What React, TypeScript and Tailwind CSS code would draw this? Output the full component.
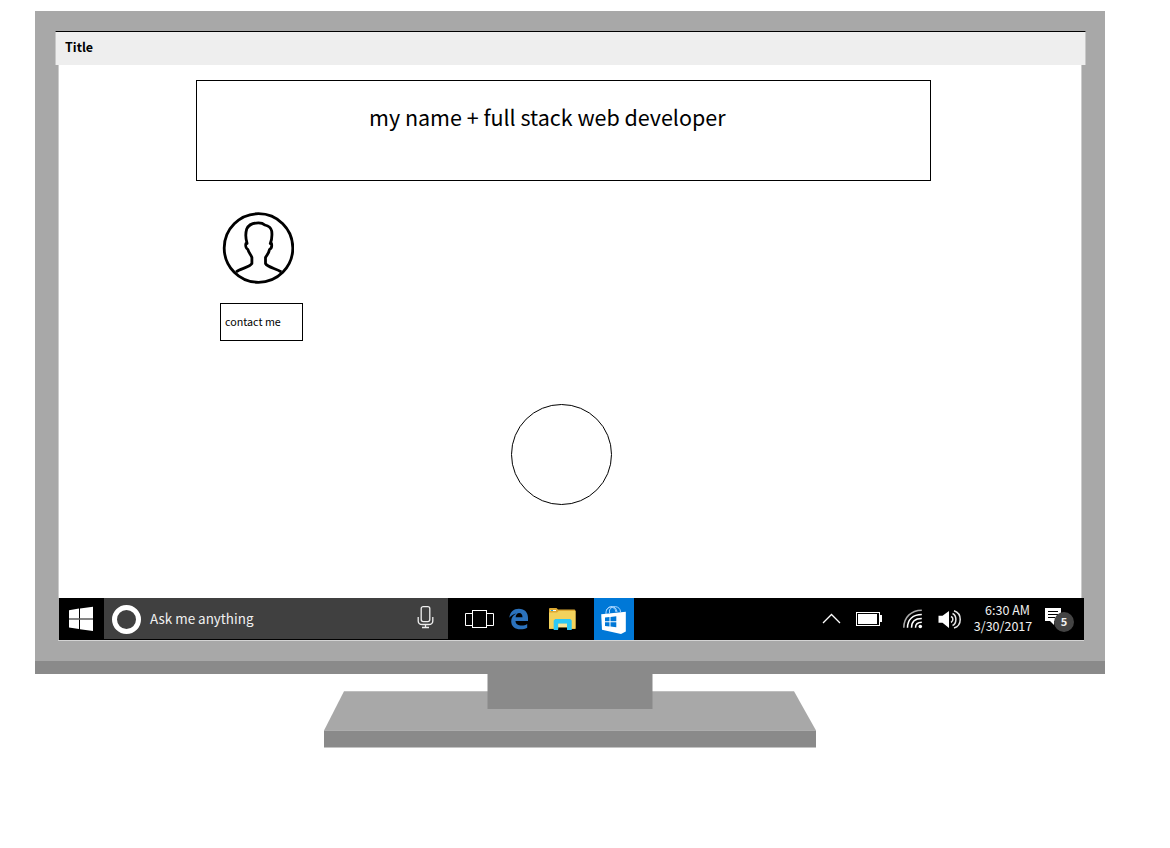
import type { ReactNode } from "react";

type GlyphProps = { viewBox: string; className: string; label: string; children: ReactNode };

function Glyph({ viewBox, className, label, children }: GlyphProps) {
  return (
    <svg viewBox={viewBox} className={`block shrink-0 ${className}`} role="img" aria-label={label} fill="none">
      {children}
    </svg>
  );
}

function UserAvatar() {
  return (
    <Glyph viewBox="-0.5 0 72 72" className="h-[72px] w-[72px]" label="User">
      <g stroke="#000" strokeWidth="2.8" strokeLinejoin="round">
        <circle cx="36" cy="36" r="34.3" />
        <path d="M13.500 60C18 56.500 27 55.500 29.400 51.500V45.500C28.500 42.500 26.200 41 25.400 37.500C23.400 36.500 22.900 33.500 23.400 31.500H24.600C23.200 27 23 21 24.200 17C26.200 12.500 31 10.900 36 10.900C39 10.900 40.800 11.600 42.300 13C46 13.800 48.500 15.500 49.200 19C49.700 23 49.200 28 47.800 31.500H49C49.500 34 48.900 36.500 47 37.500C46.600 40.500 44.500 43 43 45.500V51.500C45 55.500 54 56.500 58.800 60" />
      </g>
    </Glyph>
  );
}

function Taskbar() {
  return (
    <footer className="ml-[4px] flex h-[42px] w-[1025px] bg-black text-[#f0f0f0]">
      <div className="w-[45px] shrink-0">
        <Glyph viewBox="0 0 45 42" className="h-[42px] w-[45px]" label="Start">
          <path d="M10 12.200 20 10.600V20.500H10ZM21 10.400 34 8.800V20.500H21ZM10 21.500H20V31L10 29.500ZM21 21.500H34V33L21 31.200Z" fill="#fff" />
          <path d="M10 21H34" stroke="#888" />
        </Glyph>
      </div>
      <div className="flex h-[41px] w-[344px] shrink-0 items-center bg-[#404040]">
        <div className="ml-[8px] mt-[2px] h-[29px] w-[29px] rounded-full border-[5px] border-white" />
        <span className="-mt-px ml-[9px] w-[266px] text-[13.430px] leading-[20px]">Ask me anything</span>
        <Glyph viewBox="0 0 20 26" className="-mt-[4px] h-[26px] w-[20px]" label="Microphone">
          <rect x="5.200" y="2.600" width="8.600" height="15" rx="2" stroke="#eee" strokeWidth="1.300" />
          <path d="M2.200 13V17C2.200 19.500 4 20.500 6.500 20.500H12.500C15 20.500 16.800 19.500 16.800 17V13M9.500 20.500V23.500M6 23.500H13" stroke="#eee" strokeWidth="1.300" />
        </Glyph>
      </div>
      <Glyph viewBox="0 0 48 42" className="ml-[2px] h-[42px] w-[48px]" label="Task view">
        <g stroke="#fff">
          <rect x="22.500" y="12.500" width="14" height="17" />
          <path d="M22.500 15.500H15.500V27.500H22.500M36.500 15.500H43.500V27.500H36.500" />
        </g>
      </Glyph>
      <Glyph viewBox="0 0 24 42" className="ml-[9px] h-[42px] w-[24px]" label="Edge">
        <path d="M2.300 19.700C3.100 13.700 6.700 10.700 11.800 10.700C17.800 10.700 21 14.500 21 20V23H8.500C8.700 26.400 11.500 27.600 14.500 27.600C16.800 27.600 18.700 27 20.200 26V29.700C18.400 30.800 16 31.300 13.500 31.300C8 31.300 4.200 28.300 4.200 23.200C4.200 19.500 6.300 16.900 9.500 15.400C6.500 15.700 4.100 17.500 2.300 19.700ZM8.600 19.200H15.500C15.500 16.700 14.400 14.900 12.200 14.900C10.200 14.900 8.900 16.800 8.600 19.200Z" fill="#2b72bd" />
      </Glyph>
      <Glyph viewBox="0 0 30 42" className="ml-[16px] h-[42px] w-[30px]" label="File explorer">
        <path d="M2 11Q2 10 3 10H9.500L11 11.500H27.500Q28.500 11.500 28.500 13V31H2Z" fill="#dca832" />
        <path d="M2 14.500H10L11.500 13H28.500V30.500H2Z" fill="#f2d25c" />
        <path d="M3.500 12.500H9" stroke="#fff" />
        <path d="M4 12.500H6" stroke="#24a7dd" />
        <path d="M6.700 32V22.500L8.200 21H23.200L24.700 22.500V32H20V25.700H11.300V32Z" fill="#2cc8f5" />
        <path d="M11.300 25.700H20V29H11.300Z" fill="#f8e69b" />
        <path d="M11.300 29.500H20V32H11.300Z" fill="#000" />
      </Glyph>
      <div className="ml-[17px] w-[40px] shrink-0 bg-[#0078d7]">
        <Glyph viewBox="0 0 40 42" className="h-[42px] w-[40px]" label="Store">
          <path d="M7.200 16.300 31.800 13.700V33.500L27 36 8 31.800Z" fill="#fff" />
          <path d="M12 16V14C12.500 7.500 21.500 7.500 22 14M15.500 15V12C17.500 7 26.500 7.500 26.500 14M12.500 12C15 7 22 7 23 14" stroke="#a9d5ff" />
          <path d="M11 19.500 15.500 19V23.300H11ZM16.500 18.900 22.300 18.200V23.300H16.500ZM11 24.300H15.500V28.400L11 27.900ZM16.500 24.300H22.300V29.200L16.500 28.500Z" fill="#0078d7" />
        </Glyph>
      </div>
      <Glyph viewBox="0 0 20 42" className="ml-[188px] h-[42px] w-[20px]" label="Show hidden icons">
        <path d="M1 25 9.500 16.500 18 25" stroke="#fff" strokeWidth="1.300" />
      </Glyph>
      <Glyph viewBox="0 0 28 42" className="ml-[13px] h-[42px] w-[28px]" label="Battery">
        <rect x="1.500" y="14.500" width="23" height="13" stroke="#fff" />
        <rect x="3" y="16" width="19" height="10" fill="#fff" />
        <path d="M25 17H27V24H25Z" fill="#fff" />
      </Glyph>
      <Glyph viewBox="0 0 22 42" className="ml-[19px] h-[42px] w-[22px]" label="Wi-Fi">
        <circle cx="18.300" cy="28.500" r="1.800" fill="#fff" />
        <g stroke="#fff" strokeWidth="1.500">
          <path d="M1.800 29.700C1.800 19.500 9 12.200 19.800 12.200" stroke="#aaa" />
          <path d="M5.500 29.700C5.500 21.500 11 16.500 19.800 16.500" />
          <path d="M9.500 29.700C9.500 24 13 20.500 19.800 20.500" />
          <path d="M13.500 29.700C13.500 26.500 15.500 24.300 19.800 24.300" />
        </g>
      </Glyph>
      <Glyph viewBox="0 0 25 42" className="ml-[13px] h-[42px] w-[25px]" label="Volume">
        <path d="M1.500 17.800H5.500L12 13V30L5.500 24.700H1.500Z" fill="#fff" />
        <path d="M14 18.500C16.500 19.500 16.500 23 14 24.500M15.500 15.500C20 17.500 20 25.500 15.500 27.500M17 12.700C25.300 15.500 25.300 27.500 17 30" stroke="#e6e6e6" strokeWidth="1.500" />
      </Glyph>
      <div className="ml-[5px] flex w-[72px] shrink-0 flex-col items-center pt-[4px] text-[12.530px] leading-[16px]">
        <span className="pl-[9px]">6:30 AM</span>
        <span className="whitespace-nowrap">3/30/2017</span>
      </div>
      <div className="relative ml-[5px] h-[42px] w-[32px] shrink-0">
        <Glyph viewBox="0 0 20 42" className="h-[42px] w-[20px]" label="Notifications">
          <path d="M1 10H17V23H10V27L6 23H1Z" fill="#fff" />
          <path d="M4 13.500H14M4 16.500H14M4 19.500H11" stroke="#000" />
        </Glyph>
        <span className="absolute left-[10px] top-[14px] flex h-[20px] w-[20px] items-center justify-center rounded-full bg-[#444] pb-[2px] text-[11px] font-bold leading-none">
          5
        </span>
      </div>
    </footer>
  );
}

export default function App() {
  return (
    <main className="h-[848px] w-[1170px] overflow-hidden bg-white pl-[35px] pt-[11px] font-['Noto_Sans_CJK_SC','Noto_Sans',sans-serif] text-black">
      <section className="h-[663px] w-[1070px] border-b-[13px] border-[#8a8a8a] bg-[#a8a8a8] pl-[20px] pt-[20px]">
        <header className="flex h-[34px] w-[1031px] items-center border-x border-t border-x-[#c8c8c8] border-t-black bg-[#eee] pb-[3px] pl-[9px]">
          <h1 className="text-[12.530px] font-bold leading-[20px]">Title</h1>
        </header>
        <div className="ml-[3px] h-[533px] w-[1024px] border-x border-[#ccc] bg-white pl-[137px] pt-[15px]">
          <div className="flex h-[101px] w-[735px] border border-black pl-[172px] pt-[18px]">
            <h2 className="whitespace-nowrap text-[21.490px] leading-[36px]">my name + full stack web developer</h2>
          </div>
          <div className="ml-[26px] mt-[31px]">
            <UserAvatar />
          </div>
          <div className="ml-[24px] mt-[19px] flex h-[38px] w-[83px] items-center border border-black pb-px pl-[4px]">
            <span className="text-[10.740px] leading-[16px]">contact me</span>
          </div>
          <div className="ml-[315px] mt-[63px] h-[101px] w-[101px] rounded-full border border-black" />
        </div>
        <Taskbar />
        <div className="ml-[3px] h-px w-[1026px] bg-[#d4d4d4]" />
      </section>
      <Glyph viewBox="0 0 492 74" className="ml-[289px] h-[74px] w-[492px]" label="Monitor stand">
        <path d="M20 17.300H470L492 56.500H0Z" fill="#a8a8a8" />
        <path d="M0 56.500H492V73.500H0ZM163.500 0H328.500V35H163.500Z" fill="#8a8a8a" />
      </Glyph>
    </main>
  );
}
